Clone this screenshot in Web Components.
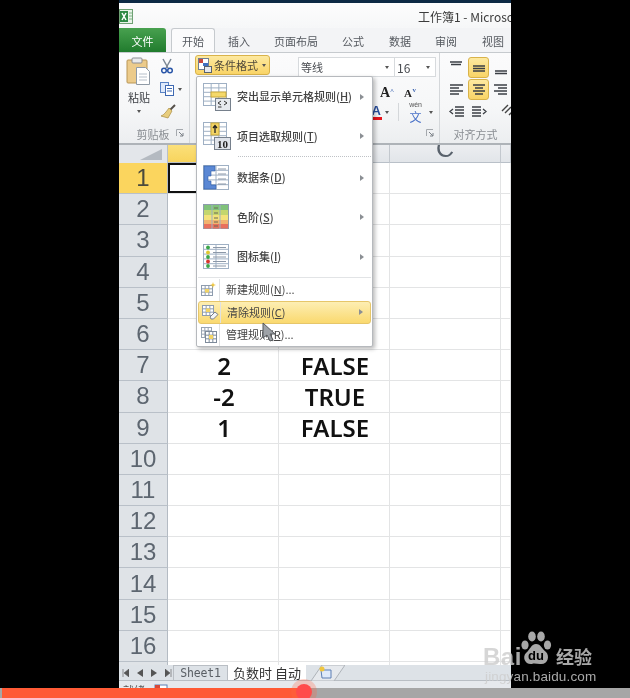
<!DOCTYPE html>
<html lang="zh">
<head>
<meta charset="utf-8">
<title>工作簿1 - Microsoft Excel</title>
<style>
    html, body { margin: 0; background: #000; }
    body { width: 630px; height: 698px; overflow: hidden; font-family: "Noto Sans CJK SC", "Liberation Sans", sans-serif; }
</style>
</head>
<body>
<xl-window>
    <xl-titlebar>工作簿1 - Microsoft Excel</xl-titlebar>
    <xl-tabs></xl-tabs>
    <xl-ribbon></xl-ribbon>
    <xl-grid></xl-grid>
    <xl-sheetbar></xl-sheetbar>
    <xl-menu slot="overlay">
        <xl-menu-item size="big" icon="highlight" arrow>突出显示单元格规则(<u>H</u>)</xl-menu-item>
        <xl-menu-item size="big" icon="top10" arrow>项目选取规则(<u>T</u>)</xl-menu-item>
        <xl-menu-sep dotted></xl-menu-sep>
        <xl-menu-item size="big" icon="databar" arrow>数据条(<u>D</u>)</xl-menu-item>
        <xl-menu-item size="big" icon="scale" arrow>色阶(<u>S</u>)</xl-menu-item>
        <xl-menu-item size="big" icon="iconset" arrow>图标集(<u>I</u>)</xl-menu-item>
        <xl-menu-sep></xl-menu-sep>
        <xl-menu-item size="small" icon="newrule">新建规则(<u>N</u>)...</xl-menu-item>
        <xl-menu-item size="small" icon="clear" arrow active>清除规则(<u>C</u>)</xl-menu-item>
        <xl-menu-item size="small" icon="manage">管理规则(<u>R</u>)...</xl-menu-item>
    </xl-menu>
</xl-window>
<xl-progress></xl-progress>
<xl-watermark></xl-watermark>

<script>
const FONT = '"Noto Sans CJK SC", "Liberation Sans", sans-serif';

// small table used behind most of the menu icons
function tableSvg(x, y, w, h, cols, rows, line) {
    let s = `<rect x="${x}" y="${y}" width="${w}" height="${h}" fill="#fff" stroke="${line}"/>`;
    for (let i = 1; i < cols; i++) {
        const px = x + i * w / cols;
        s += `<path d="M${px} ${y}V${y + h}" stroke="${line}" fill="none"/>`;
    }
    for (let i = 1; i < rows; i++) {
        const py = y + i * h / rows;
        s += `<path d="M${x} ${py}H${x + w}" stroke="${line}" fill="none"/>`;
    }
    return s;
}

const MENU_ICONS = {
    highlight: `<svg width="30" height="30" viewBox="0 0 30 30">${tableSvg(1.5, 1.5, 23, 22, 3, 5, '#9fb0c4')}
        <rect x="9" y="10" width="15" height="5" fill="#f5d96b" stroke="#c9a93c"/>
        <rect x="13.5" y="16.5" width="15" height="12" fill="#e6e9ee" stroke="#76808c"/>
        <path d="M19 19l-3 2 3 2M16 25h3.500M22 19l3 2-3 2" stroke="#333" fill="none"/></svg>`,
    top10: `<svg width="30" height="30" viewBox="0 0 30 30">${tableSvg(1.5, 1.5, 23, 22, 3, 5, '#9fb0c4')}
        <rect x="9" y="2" width="8" height="12" fill="#f2d465" stroke="#c9a93c"/>
        <path d="M13 12V5M11 7l2-2.500 2 2.500" stroke="#222" fill="none" stroke-width="1.300"/>
        <rect x="12.500" y="16.500" width="16" height="12" fill="#dfe3ea" stroke="#76808c"/>
        <text x="20.500" y="27" text-anchor="middle" font-family="Liberation Serif, serif" font-size="11" font-weight="700" fill="#222">10</text></svg>`,
    databar: `<svg width="30" height="30" viewBox="0 0 30 30">${tableSvg(1.5, 2.5, 25, 24, 2, 5, '#9fb0c4')}
        <path d="M2 3h11v5H9v5H6v5h3v4h5v4H2z" fill="#5b88d4" stroke="#2f5ea8" stroke-width=".6"/>
        <path d="M16 6h8M16 11h8M16 16h8M16 21h8" stroke="#8c98a8"/></svg>`,
    scale: `<svg width="30" height="30" viewBox="0 0 30 30">${tableSvg(1.5, 2.5, 25, 24, 1, 1, '#8e9cae')}
        <rect x="2" y="3" width="24" height="5" fill="#80c27a"/><rect x="2" y="8" width="24" height="5" fill="#c3d66e"/>
        <rect x="2" y="13" width="24" height="5" fill="#f3e27a"/><rect x="2" y="18" width="24" height="4" fill="#f1b26e"/>
        <rect x="2" y="22" width="24" height="4.500" fill="#e8705d"/>
        <path d="M10 3v24M18 3v24" stroke="#9fb0c4"/><path d="M12 6h4M12 11h4M12 16h4M12 20h4M12 24h4" stroke="#6b6b55"/></svg>`,
    iconset: `<svg width="30" height="30" viewBox="0 0 30 30">${tableSvg(1.5, 2.5, 25, 24, 2, 5, '#9fb0c4')}
        <circle cx="6" cy="5.500" r="1.900" fill="#3aa648"/><circle cx="6" cy="10.500" r="1.900" fill="#e0c92f"/>
        <circle cx="6" cy="15" r="1.900" fill="#3aa648"/><circle cx="6" cy="19.500" r="1.900" fill="#d8362d"/>
        <circle cx="6" cy="24" r="1.900" fill="#3aa648"/>
        <path d="M11 5.500h13M11 10.500h13M11 15h13M11 19.500h13M11 24h13" stroke="#8c98a8"/></svg>`,
    newrule: `<svg width="18" height="18" viewBox="0 0 18 18">${tableSvg(1.5, 4.5, 11, 10, 3, 3, '#8e9cae')}
        <rect x="5" y="8" width="4" height="3.500" fill="#f2d465"/>
        <path d="M13 1l.7 2.300L16 4l-2.300.7L13 7l-.7-2.300L10 4l2.300-.7z" fill="#efc53a"/></svg>`,
    clear: `<svg width="18" height="18" viewBox="0 0 18 18">${tableSvg(1.5, 2.5, 11, 10, 3, 3, '#8e9cae')}
        <rect x="5" y="5.500" width="4" height="3.500" fill="#f2d465"/>
        <path d="M9 14l5-5 3 2.500-4.500 4.500H10z" fill="#f4f5f7" stroke="#7a7f88"/></svg>`,
    manage: `<svg width="18" height="18" viewBox="0 0 18 18">${tableSvg(1.5, 1.5, 10, 10, 3, 3, '#98a4b3')}
        ${tableSvg(5.5, 5.5, 11, 11, 3, 3, '#7d8a9a')}<rect x="9" y="9" width="4" height="4" fill="#f2d465"/></svg>`
};

class XlWindow extends HTMLElement {
    constructor() {
        super();
        this.attachShadow({ mode: 'open' }).innerHTML = `
            <style>
                :host {
                    display: flex;
                    flex-direction: column;
                    position: relative;
                    width: 392px;
                    height: 698px;
                    margin-left: 119px;
                    overflow: hidden;
                    background: #fff;
                    font-family: ${FONT};
                    filter: blur(.35px);
                }
            </style>
            <slot></slot>
            <slot name="overlay"></slot>`;
    }
}

class XlTitlebar extends HTMLElement {
    constructor() {
        super();
        this.attachShadow({ mode: 'open' }).innerHTML = `
            <style>
                :host {
                    display: flex;
                    flex: none;
                    align-items: center;
                    justify-content: space-between;
                    box-sizing: border-box;
                    height: 28px;
                    border-top: 3px solid #0d2a45;
                    background: linear-gradient(#fdfdfd, #f6f7f8);
                    color: #3c3c3c;
                    font-size: 12px;
                    overflow: hidden;
                }
                svg { margin: 2px 0 0 0; flex: none; }
                .t { flex: none; width: 93px; white-space: nowrap; overflow: hidden; margin-top: 1px; }
            </style>
            <svg width="14" height="15" viewBox="0 0 14 15">
                <rect x=".5" y=".5" width="13" height="14" fill="#e9f3e9" stroke="#6fa174"/>
                <rect x="1" y="2" width="8" height="11" fill="#2f8a44"/>
                <path d="M3 4l4 7M7 4l-4 7" stroke="#fff" stroke-width="1.500"/>
                <path d="M10 4h3M10 7h3M10 10h3" stroke="#7fb487"/>
            </svg>
            <span class="t"><slot></slot></span>`;
    }
}

class XlTabs extends HTMLElement {
    constructor() {
        super();
        const tabs = [['插入', 48], ['页面布局', 66], ['公式', 48], ['数据', 46], ['审阅', 46], ['视图', 48]];
        this.attachShadow({ mode: 'open' }).innerHTML = `
            <style>
                :host {
                    display: flex;
                    flex: none;
                    box-sizing: border-box;
                    height: 25px;
                    background: #f3f4f6;
                    border-bottom: 1px solid #c6cace;
                    font-size: 11px;
                    color: #55595f;
                    overflow: hidden;
                }
                .tab { flex: none; display: flex; align-items: center; justify-content: center; height: 25px; }
                .file {
                    width: 47px;
                    margin-right: 5px;
                    background: linear-gradient(#48a14f, #1f7a2c);
                    border-radius: 0 3px 0 0;
                    color: #fff;
                }
                .home {
                    box-sizing: border-box;
                    width: 44px;
                    background: #fbfbfc;
                    border: 1px solid #c6cace;
                    border-bottom: 0;
                    border-radius: 3px 3px 0 0;
                    height: 25px;
                }
            </style>
            <div class="tab file">文件</div>
            <div class="tab home">开始</div>
            ${tabs.map(([name, w]) => `<div class="tab" style="width:${w}px">${name}</div>`).join('')}`;
    }
}

class XlRibbon extends HTMLElement {
    constructor() {
        super();
        this.attachShadow({ mode: 'open' }).innerHTML = `
            <style>
                :host {
                    display: flex;
                    flex: none;
                    box-sizing: border-box;
                    height: 92px;
                    background: linear-gradient(#fbfbfc 0, #f6f7f8 60%, #eceef0 100%);
                    border-bottom: 2px solid #aeb3b8;
                    font-size: 11px;
                    color: #4a4d52;
                    overflow: hidden;
                }
                .group {
                    position: relative;
                    flex: none;
                    display: flex;
                    flex-direction: column;
                    box-sizing: border-box;
                    border-right: 1px solid #d4d7da;
                }
                .body { flex: 1; display: flex; min-height: 0; }
                .label {
                    flex: none;
                    height: 19px;
                    display: flex;
                    align-items: center;
                    justify-content: center;
                    color: #8a8e93;
                    font-size: 11px;
                    position: relative;
                }
                .launch { position: absolute; right: 5px; top: 5px; }
                .clip { width: 71px; }
                .clip .paste { width: 40px; display: flex; flex-direction: column; align-items: center; padding-top: 4px; }
                .clip .paste span { margin-top: 4px; line-height: 14px; color: #3e4146; }
                .clip .tools { display: flex; flex-direction: column; gap: 5px; padding: 4px 0 0 1px; }
                .clip .tools div { display: flex; align-items: center; gap: 3px; height: 18px; }
                .caret { width: 0; height: 0; border: 2.500px solid transparent; border-top: 3px solid #555; border-bottom: 0; }
                .font { width: 250px; }
                .font .body { justify-content: space-between; padding: 2px 3px 0 5px; }
                .cond {
                    display: flex;
                    align-items: center;
                    gap: 2px;
                    box-sizing: border-box;
                    width: 75px;
                    height: 20px;
                    background: linear-gradient(#fde9a0, #f9d467);
                    border: 1px solid #d9b34a;
                    border-radius: 3px;
                    padding-left: 2px;
                    color: #50493a;
                }
                .right { width: 138px; display: flex; flex-direction: column; padding-top: 2px; }
                .combos { display: flex; flex: none; height: 20px; background: #fff; border: 1px solid #d7dadd; box-sizing: border-box; width: 138px; }
                .combos div { display: flex; align-items: center; justify-content: space-between; padding: 0 5px 0 2px; box-sizing: border-box; }
                .combos .name { width: 96px; border-right: 1px solid #d7dadd; }
                .combos .size { flex: 1; font-size: 12px; }
                .r2 { display: flex; justify-content: flex-end; align-items: flex-end; gap: 14px; height: 24px; padding-right: 24px; }
                .r2 b { font: 700 14px/16px "Liberation Serif", serif; color: #222; position: relative; }
                .r2 b.small { font-size: 11px; }
                .r3 { display: flex; justify-content: flex-end; align-items: center; height: 24px; padding-right: 3px; gap: 3px; }
                .fa { display: flex; flex-direction: column; align-items: center; font: 700 13px/12px "Liberation Sans", sans-serif; color: #2a4f9c; }
                .fa i { display: block; width: 12px; height: 3px; background: #e8141c; margin-top: 0; }
                .vsep { width: 1px; height: 18px; background: #d4d7da; margin: 0 7px 0 6px; }
                .wen { display: flex; flex-direction: column; align-items: center; color: #4a72c8; font-size: 12px; line-height: 15px; margin-right: 4px; }
                .wen small { font: 7px/8px "Liberation Sans", sans-serif; color: #555; }
                .align { width: 71px; border-right: 0; }
                .align .body { display: grid; grid-template-columns: 22px 22px 22px; grid-auto-rows: 22px; padding: 4px 0 0 6px; }
                .ic { display: flex; align-items: center; justify-content: center; width: 21px; height: 21px; box-sizing: border-box; }
                .ic.on { background: linear-gradient(#fde9a0, #f9d467); border: 1px solid #d9b34a; border-radius: 3px; }
                .ic.far { margin-left: 7px; }
            </style>
            <div class="group clip">
                <div class="body">
                    <div class="paste">
                        <svg width="26" height="29" viewBox="0 0 26 29">
                            <rect x="1" y="3" width="20" height="23" rx="1" fill="#eccb8b" stroke="#b99657"/>
                            <rect x="6" y="1" width="10" height="5" rx="1" fill="#e9eaec" stroke="#8d8f93"/>
                            <path d="M10.500 10.500h9l4 4v13h-13z" fill="#fff" stroke="#8f9aa6"/>
                            <path d="M13 17h8M13 20h8M13 23h8" stroke="#b7c0ca"/>
                        </svg>
                        <span>粘贴</span>
                        <i class="caret" style="margin-top:6px"></i>
                    </div>
                    <div class="tools">
                        <div><svg width="14" height="16" viewBox="0 0 14 16"><path d="M3 1l5 9M11 1L6 10" stroke="#7b8794" stroke-width="1.500" fill="none"/><circle cx="4" cy="12.500" r="2.300" fill="none" stroke="#2a56a8" stroke-width="1.500"/><circle cx="10" cy="12.500" r="2.300" fill="none" stroke="#2a56a8" stroke-width="1.500"/></svg></div>
                        <div><svg width="15" height="14" viewBox="0 0 15 14"><rect x=".5" y=".5" width="8" height="10" fill="#dfeafb" stroke="#5a83c4"/><rect x="5.500" y="3.500" width="8" height="10" fill="#fff" stroke="#3f69b2"/><path d="M7 6.500h5M7 9h5" stroke="#3f69b2"/></svg><i class="caret"></i></div>
                        <div><svg width="16" height="16" viewBox="0 0 16 16"><path d="M15 1l-5 5" stroke="#55504a" stroke-width="2"/><path d="M9 4l3 3-4 7-7-2c3-1 5-4 8-8z" fill="#e8cd7d" stroke="#a98d42" stroke-width=".7"/></svg></div>
                    </div>
                </div>
                <div class="label" style="padding-right:2px">剪贴板<svg class="launch" width="8" height="8" viewBox="0 0 8 8"><path d="M.5 7V.5H7" stroke="#a5a9ae" fill="none"/><path d="M3 3l4 4M7 4v3H4" stroke="#7b8087" fill="none"/></svg></div>
            </div>
            <div class="group font">
                <div class="body">
                    <div class="cond">
                        <svg width="14" height="15" viewBox="0 0 14 15"><rect x=".5" y=".5" width="10" height="11" fill="#fff" stroke="#6f7f95"/><rect x="1" y="1" width="4" height="4" fill="#c9463d"/><rect x="5" y="5" width="5" height="3" fill="#3f6fc0"/><rect x="6.500" y="8.500" width="7" height="6" fill="#e6e8ec" stroke="#59626e"/></svg>
                        <span>条件格式</span><i class="caret" style="margin-left:2px"></i>
                    </div>
                    <div class="right">
                        <div class="combos">
                            <div class="name"><span>等线</span><i class="caret"></i></div>
                            <div class="size"><span>16</span><i class="caret"></i></div>
                        </div>
                        <div class="r2"><b>A<span style="position:absolute;top:-2px;right:-4px;font-size:7px;color:#3a62b0">^</span></b><b class="small">A<span style="position:absolute;top:-3px;right:-4px;font-size:7px;color:#3a62b0">v</span></b></div>
                        <div class="r3">
                            <div class="fa">A<i></i></div><i class="caret"></i>
                            <div class="vsep"></div>
                            <span class="wen"><small>wén</small>文</span><i class="caret"></i>
                        </div>
                    </div>
                </div>
                <div class="label"><svg class="launch" width="8" height="8" viewBox="0 0 8 8"><path d="M.5 7V.5H7" stroke="#a5a9ae" fill="none"/><path d="M3 3l4 4M7 4v3H4" stroke="#7b8087" fill="none"/></svg></div>
            </div>
            <div class="group align">
                <div class="body">
                    ${this.alignIcon('M2 3h12M3 5.500h10', '')}
                    ${this.alignIcon('M3 7h12M3 9.500h12M3 12h12', 'on')}
                    ${this.alignIcon('M3 12h12M3 14.500h12', '')}
                    ${this.alignIcon('M2 4h13M2 7h9M2 10h13M2 13h9', '')}
                    ${this.alignIcon('M3 4h12M5 7h8M3 10h12M5 13h8', 'on')}
                    ${this.alignIcon('M2 4h13M6 7h9M2 10h13M6 13h9', '')}
                    ${this.alignIcon('M7 4h9M7 7h9M7 10h9M7 13h9M5 6L2 8.500 5 11', '')}
                    ${this.alignIcon('M2 4h9M2 7h9M2 10h9M2 13h9M13 6l3 2.500-3 2.500', '')}
                    <div class="ic far"><svg width="17" height="17" viewBox="0 0 17 17"><path d="M9 2L3 8M12 4l-6 6M15 7l-5 5" stroke="#444" stroke-width="1.400" fill="none"/></svg></div>
                </div>
                <div class="label" style="padding-left:0">对齐方式</div>
            </div>`;
    }

    alignIcon(d, cls) {
        return `<div class="ic ${cls}"><svg width="17" height="17" viewBox="0 0 17 17"><path d="${d}" stroke="#3b3f45" stroke-width="1.300" fill="none"/></svg></div>`;
    }
}

class XlGrid extends HTMLElement {
    constructor() {
        super();
        const data = { 7: ['2', 'FALSE'], 8: ['-2', 'TRUE'], 9: ['1', 'FALSE'] };
        let rows = '';
        for (let r = 1; r <= 17; r++) {
            const vals = data[r] || ['', ''];
            rows += `<div class="rh ${r === 1 ? 'sel' : ''}">${r <= 16 ? r : ''}</div>
                <div class="c ${r === 1 ? 'cur' : ''}"><span>${vals[0]}</span></div>
                <div class="c"><span>${vals[1]}</span></div><div class="c"></div><div class="c"></div>`;
        }
        // the A and B letters sit behind the open menu, so only C is written
        this.attachShadow({ mode: 'open' }).innerHTML = `
            <style>
                :host {
                    display: block;
                    flex: none;
                    height: 520px;
                    overflow: hidden;
                    background: #fff;
                }
                * { box-sizing: border-box; }
                .sheet {
                    display: grid;
                    grid-template-columns: 49px 111px 111px 111px 10px;
                    grid-template-rows: 18px repeat(17, 31.2px);
                }
                .corner { background: #e3e6ea; border-right: 1px solid #b9c0c8; display: flex; align-items: flex-end; justify-content: flex-end; padding: 0 5px 3px 0; }
                .ch {
                    background: linear-gradient(#eceef1, #e2e5e9);
                    border-right: 1px solid #c3c8ce;
                    border-bottom: 1px solid #b9c0c8;
                    overflow: hidden;
                    text-align: center;
                    font: 25px/6px "Liberation Sans", sans-serif;
                    color: #59626c;
                }
                .ch.sel { background: linear-gradient(#fbe07a, #f8d45d); }
                .rh {
                    display: flex;
                    align-items: center;
                    justify-content: center;
                    background: #dfe3e7;
                    border-right: 1px solid #b4bbc3;
                    border-bottom: 1px solid #b9c0c8;
                    font: 24px "Liberation Sans", sans-serif;
                    color: #5d6670;
                }
                .rh.sel { background: #fbd55e; color: #4a4a3c; }
                .c {
                    display: flex;
                    align-items: center;
                    justify-content: center;
                    min-width: 0;
                    border-right: 1px solid #e3e4e5;
                    border-bottom: 1px solid #e3e4e5;
                    font: 600 24px "Noto Sans", sans-serif;
                    color: #111;
                }
                .c span { position: relative; left: 1px; }
                .c.cur { box-shadow: inset 0 0 0 2px #111; }
            </style>
            <div class="sheet">
                <div class="corner"><svg width="22" height="11" viewBox="0 0 22 11"><path d="M22 0V11H0z" fill="#b4bac1"/></svg></div>
                <div class="ch sel"></div><div class="ch"></div><div class="ch">C</div><div class="ch"></div>
                ${rows}
            </div>`;
    }
}

class XlSheetbar extends HTMLElement {
    constructor() {
        super();
        this.attachShadow({ mode: 'open' }).innerHTML = `
            <style>
                :host { display: block; flex: none; height: 33px; overflow: hidden; }
                .tabs {
                    display: flex;
                    align-items: stretch;
                    box-sizing: border-box;
                    height: 16px;
                    background: #dde2e7;
                    border-bottom: 1px solid #b9bec4;
                    color: #4d5258;
                }
                .nav { display: flex; align-items: center; gap: 8px; width: 54px; padding-left: 3px; box-sizing: border-box; flex: none; }
                .nav svg { display: block; }
                .sheet1 {
                    flex: none;
                    width: 53px;
                    display: flex;
                    align-items: center;
                    justify-content: center;
                    border: 1px solid #b9bec4;
                    border-bottom: 0;
                    font: 11.500px "DejaVu Sans Mono", monospace;
                    letter-spacing: -.2px;
                    color: #5a5f65;
                }
                .active {
                    flex: none;
                    width: 78px;
                    display: flex;
                    align-items: center;
                    justify-content: center;
                    background: #fff;
                    font-size: 13px;
                    line-height: 15px;
                    color: #333;
                    white-space: pre;
                }
                .add { flex: none; margin-left: 5px; }
                .status {
                    display: flex;
                    align-items: center;
                    height: 17px;
                    background: #e6e9ed;
                    font-size: 11px;
                    color: #555;
                    padding-left: 4px;
                    gap: 9px;
                }
            </style>
            <div class="tabs">
                <div class="nav">
                    <svg width="7" height="8" viewBox="0 0 7 8"><path d="M1 0v8M7 0v8L2 4z" fill="#555" stroke="#555" stroke-width=".6"/></svg>
                    <svg width="6" height="8" viewBox="0 0 6 8"><path d="M6 0v8L0 4z" fill="#555"/></svg>
                    <svg width="6" height="8" viewBox="0 0 6 8"><path d="M0 0v8l6-4z" fill="#555"/></svg>
                    <svg width="7" height="8" viewBox="0 0 7 8"><path d="M6 0v8M0 0v8l5-4z" fill="#555" stroke="#555" stroke-width=".6"/></svg>
                </div>
                <div class="sheet1">Sheet1</div>
                <div class="active">负数时 自动</div>
                <svg class="add" width="34" height="16" viewBox="0 0 34 16">
                    <path d="M0 16L11 0h23L23 16z" fill="#e6e9ed" stroke="#aeb3b9"/>
                    <path d="M10 5h10v8h-9z" fill="#dfeafa" stroke="#5c7fb3"/>
                    <circle cx="11" cy="4" r="2.500" fill="#f0c63f"/>
                </svg>
            </div>
            <div class="status">
                <span>就绪</span>
                <svg width="14" height="14" viewBox="0 0 14 14"><rect x="1" y="2" width="12" height="11" fill="#fff" stroke="#5c7fb3"/><rect x="1" y="2" width="5" height="4" fill="#d64a3a"/></svg>
            </div>`;
    }
}

class XlMenu extends HTMLElement {
    constructor() {
        super();
        this.attachShadow({ mode: 'open' }).innerHTML = `
            <style>
                :host {
                    display: flex;
                    flex-direction: column;
                    position: absolute;
                    left: 77px;
                    top: 76px;
                    box-sizing: border-box;
                    width: 177px;
                    height: 271px;
                    padding: 0 1px;
                    background: #fff;
                    border: 1px solid #b6b9bd;
                    border-radius: 2px;
                    box-shadow: 2px 2px 4px rgba(0, 0, 0, .28);
                    color: #444;
                }
                .cursor { position: absolute; left: 65px; top: 245px; }
            </style>
            <slot></slot>
            <svg class="cursor" width="13" height="20" viewBox="0 0 13 20">
                <path d="M1 1v15l4-3 3 6 3-1-3-6h5z" fill="#9ea2a7" stroke="#55585c"/>
            </svg>`;
    }
}

class XlMenuItem extends HTMLElement {
    constructor() {
        super();
        const big = this.getAttribute('size') === 'big';
        const active = this.hasAttribute('active');
        this.attachShadow({ mode: 'open' }).innerHTML = `
            <style>
                :host {
                    display: flex;
                    align-items: center;
                    flex: none;
                    position: relative;
                    box-sizing: border-box;
                    height: ${big ? 39.5 : 22.5}px;
                    font-size: 11px;
                    ${big ? 'font-weight: 500;' : ''}
                    ${active ? 'background: linear-gradient(#fdeeb3, #fad96f); border: 1px solid #e6c66a; border-radius: 3px;' : ''}
                }
                .icon { flex: none; width: ${big ? 39 : 28}px; display: flex; justify-content: ${big ? 'flex-start' : 'center'}; ${big ? 'padding-left: 4px; box-sizing: border-box;' : ''} }
                .icon.stripe { border-right: 1px solid #dfe1e3; height: ${big ? 'auto' : '100%'}; align-items: center; box-sizing: border-box; width: 22px; margin-right: 6px; }
                .txt { flex: 1; white-space: nowrap; margin-top: -1px; }
                .arrow { width: 0; height: 0; border: 3.500px solid transparent; border-left: 4px solid #8b8f94; border-right: 0; margin-right: 7px; }
            </style>
            <span class="icon ${big ? '' : 'stripe'}">${MENU_ICONS[this.getAttribute('icon')] || ''}</span>
            <span class="txt"><slot></slot></span>
            ${this.hasAttribute('arrow') ? '<i class="arrow"></i>' : ''}`;
    }
}

class XlMenuSep extends HTMLElement {
    constructor() {
        super();
        const dotted = this.hasAttribute('dotted');
        this.attachShadow({ mode: 'open' }).innerHTML = `
            <style>
                :host {
                    display: block;
                    flex: none;
                    height: 2px;
                    box-sizing: border-box;
                    margin-left: ${dotted ? 40 : 0}px;
                    border-top: 1px ${dotted ? 'dotted #bfc2c6' : 'solid #e2e4e6'};
                }
            </style>`;
    }
}

class XlProgress extends HTMLElement {
    constructor() {
        super();
        this.attachShadow({ mode: 'open' }).innerHTML = `
            <style>
                :host {
                    display: block;
                    position: absolute;
                    left: 0;
                    top: 688px;
                    width: 630px;
                    height: 10px;
                    background: #a6a6a6;
                }
                .fill { position: absolute; left: 2px; top: 0; width: 302px; height: 10px; background: #ff5a35; }
                .halo { position: absolute; left: 291px; top: -9px; width: 26px; height: 26px; border-radius: 50%; background: rgba(255, 100, 70, .28); }
                .knob { position: absolute; left: 296px; top: -4px; width: 16px; height: 16px; border-radius: 50%; background: #ff4b4b; }
            </style>
            <div class="fill"></div>
            <div class="halo"></div>
            <div class="knob"></div>`;
    }
}

class XlWatermark extends HTMLElement {
    constructor() {
        super();
        this.attachShadow({ mode: 'open' }).innerHTML = `
            <style>
                :host {
                    display: block;
                    position: absolute;
                    left: 481px;
                    top: 628px;
                    width: 120px;
                    height: 56px;
                    color: rgba(205, 205, 205, .82);
                    filter: blur(.4px);
                }
                .bai { position: absolute; left: 2px; top: 16px; font: 700 24px/26px "Liberation Sans", sans-serif; letter-spacing: .5px; }
                .paw { position: absolute; left: 39px; top: 2px; }
                .jy { position: absolute; left: 75px; top: 17px; font: 700 18px/22px ${FONT}; }
                .url { position: absolute; left: 4px; top: 41px; font: 13.500px/16px "Liberation Sans", sans-serif; white-space: nowrap; letter-spacing: .15px; }
            </style>
            <span class="bai">Bai</span>
            <svg class="paw" width="32" height="40" viewBox="0 0 32 40">
                <ellipse cx="5" cy="15" rx="3.600" ry="4.600" fill="currentColor"/>
                <ellipse cx="12" cy="6.500" rx="3.800" ry="5" fill="currentColor"/>
                <ellipse cx="21" cy="6.500" rx="3.800" ry="5" fill="currentColor"/>
                <ellipse cx="27.500" cy="15" rx="3.600" ry="4.600" fill="currentColor"/>
                <path d="M16 14c5 0 6 5 10 8 4 4 2 13-6 12-3 0-6-1-8 0-7 1-10-7-6-11 4-3 5-9 10-9z" fill="currentColor"/>
                <text x="16" y="30" text-anchor="middle" font-family="Liberation Sans, sans-serif" font-size="13" font-weight="700" fill="#000">du</text>
            </svg>
            <span class="jy">经验</span>
            <span class="url">jingyan.baidu.com</span>`;
    }
}

customElements.define('xl-window', XlWindow);
customElements.define('xl-titlebar', XlTitlebar);
customElements.define('xl-tabs', XlTabs);
customElements.define('xl-ribbon', XlRibbon);
customElements.define('xl-grid', XlGrid);
customElements.define('xl-sheetbar', XlSheetbar);
customElements.define('xl-menu', XlMenu);
customElements.define('xl-menu-item', XlMenuItem);
customElements.define('xl-menu-sep', XlMenuSep);
customElements.define('xl-progress', XlProgress);
customElements.define('xl-watermark', XlWatermark);
</script>
</body>
</html>
